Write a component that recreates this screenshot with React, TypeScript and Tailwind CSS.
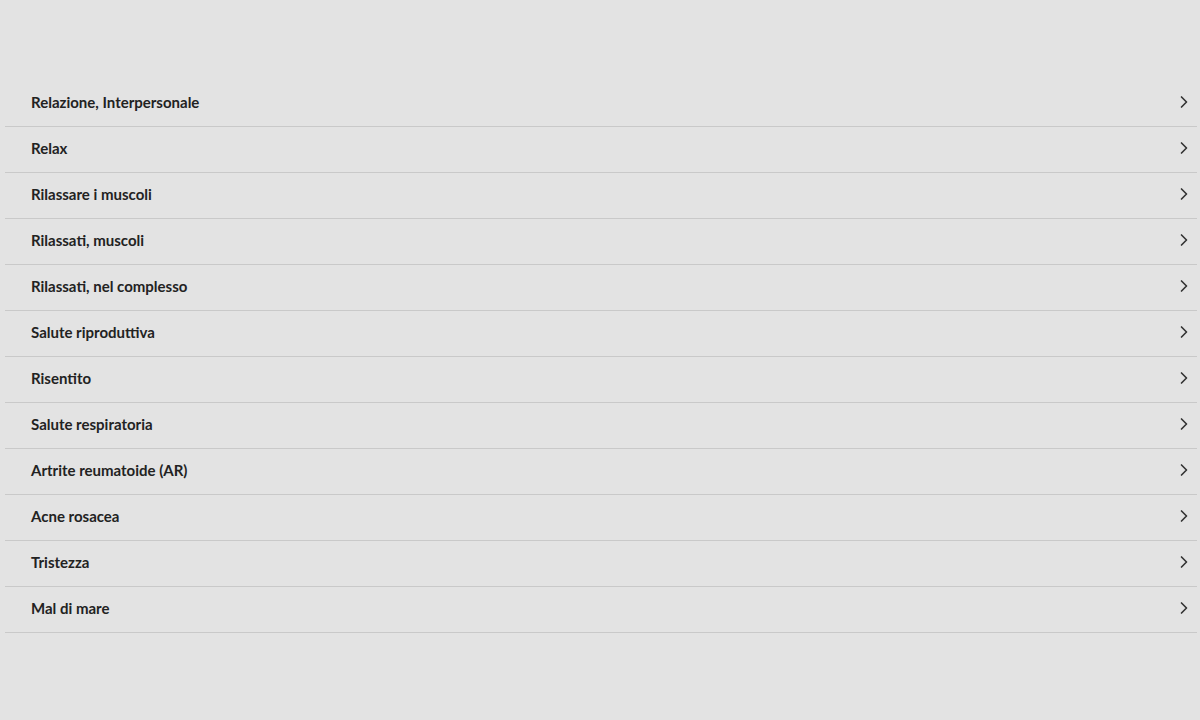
import React from "react";
import { ChevronRight } from "lucide-react";

const items = [
  "Relazione, Interpersonale",
  "Relax",
  "Rilassare i muscoli",
  "Rilassati, muscoli",
  "Rilassati, nel complesso",
  "Salute riproduttiva",
  "Risentito",
  "Salute respiratoria",
  "Artrite reumatoide (AR)",
  "Acne rosacea",
  "Tristezza",
  "Mal di mare",
];

const App = () => {
  return (
    <div className="min-h-[720px] w-full bg-[#e3e3e3] pt-[81px] font-['Lato',sans-serif]">
      <ul className="ml-[5px] mr-[3px]">
        {items.map((item) => (
          <li
            key={item}
            className="flex h-[46px] items-center justify-between border-b border-[#c9c9c9] pb-[3px] pl-[26px] pr-[3px]"
          >
            <span className="text-[15px] font-bold text-[#222]">{item}</span>
            <ChevronRight className="h-5 w-5 text-[#333]" strokeWidth={2} />
          </li>
        ))}
      </ul>
    </div>
  );
};

export default App;
